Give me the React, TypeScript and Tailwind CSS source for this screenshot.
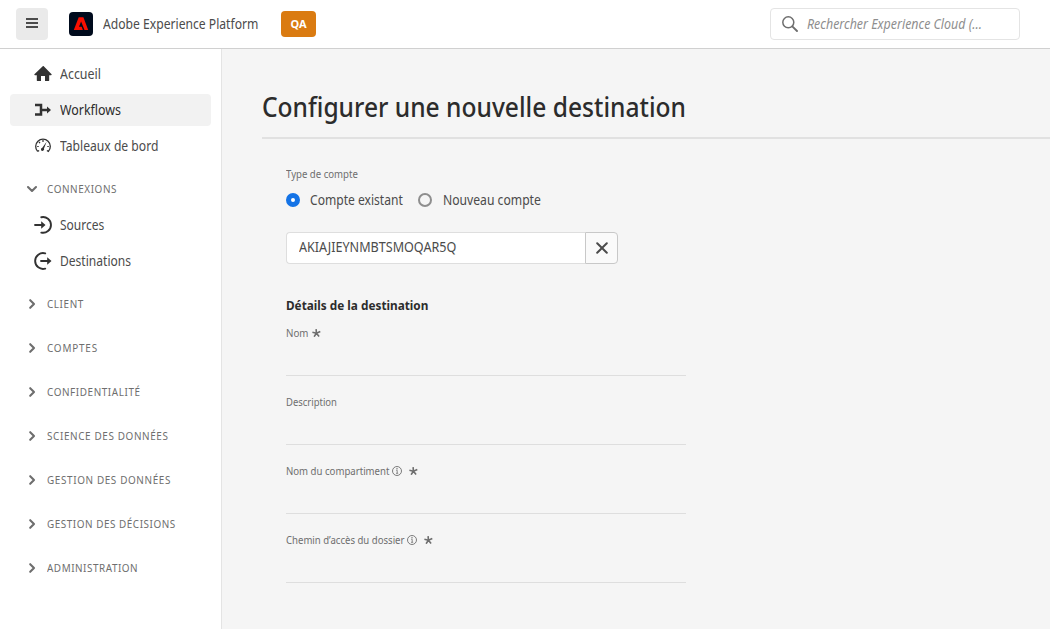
import type { ReactNode } from 'react';

const ink = 'text-[#4b4b4b]';

function Squeezed({ className, children }: { className: string; children: ReactNode }) {
  return <span className={`inline-block shrink-0 origin-left whitespace-nowrap ${className}`}>{children}</span>;
}

function Chevron({ open }: { open?: boolean }) {
  return (
    <svg width="12" height="12" viewBox="0 0 12 12" fill="none" stroke="#6e6e6e" strokeWidth="2.100" strokeLinecap="round" strokeLinejoin="round">
      {open ? <path d="M2 4l4 4 4-4" /> : <path d="M4.200 2.200l3.800 3.800-3.800 3.800" />}
    </svg>
  );
}

const icons: Record<string, ReactNode> = {
  home: <path fill="#323232" d="M9 1L.4 9.300c-.3.400 0 .900.500.900H2.800v5.300c0 .300.200.500.500.500h3.700v-5h4v5h3.700c.300 0 .500-.200.500-.500v-5.300h1.900c.500 0 .800-.500.500-.900L9.500 1.100a.7.700 0 0 0-.500-.100z" />,
  flow: (
    <>
      <path fill="none" stroke="#323232" strokeWidth="2.500" d="M1 4h6v9.500H1M7 9H14" />
      <path fill="#323232" d="M13 5.500L17 9l-4 3.500z" />
    </>
  ),
  gauge: (
    <>
      <path fill="none" stroke="#323232" strokeWidth="1.300" d="M3.600 14.400A7.300 7.300 0 1 1 14.400 14.400l-1.500-.900M3.600 14.400l1.500-.900" />
      <path fill="none" stroke="#323232" strokeWidth="1.200" d="M9 3v2M5 5l1 1.200M3.200 9.500h1.500M13.300 9.500h1.500" />
      <path fill="#323232" d="M12.600 4.800L10 11.600a1.600 1.600 0 1 1-1.700-.9z" />
    </>
  ),
  source: (
    <>
      <path fill="none" stroke="#323232" strokeWidth="1.900" strokeLinecap="round" d="M7.300 1.200A7.900 7.900 0 1 1 7.300 16.600" />
      <path fill="none" stroke="#323232" strokeWidth="1.800" strokeLinecap="round" d="M1 9h7" />
      <path fill="#323232" d="M7.200 5.200L11.500 9l-4.300 3.800z" />
    </>
  ),
  dest: (
    <>
      <path fill="none" stroke="#323232" strokeWidth="1.900" strokeLinecap="round" d="M11.200 1.400A7.900 7.900 0 1 0 11.200 16.600" />
      <path fill="none" stroke="#323232" strokeWidth="1.800" strokeLinecap="round" d="M7 9h7" />
      <path fill="#323232" d="M13.200 5.200L17.500 9l-4.300 3.800z" />
    </>
  ),
};

function NavItem({ icon, label, active, fit }: { icon: string; label: string; active?: boolean; fit: string }) {
  return (
    <a className={`flex h-8 items-center gap-2 rounded pl-6 text-[13.5px] ${active ? 'bg-[#f2f2f2] text-[#2c2c2c]' : ink}`}>
      <svg width="18" height="18" viewBox="0 0 18 18">{icons[icon]}</svg>
      <Squeezed className={fit}>{label}</Squeezed>
    </a>
  );
}

function Section({ label, open, fit }: { label: string; open?: boolean; fit: string }) {
  return (
    <div className="flex h-8 items-center gap-[9px] pl-4 text-[11px] text-[#6e6e6e]">
      <Chevron open={open} />
      <Squeezed className={`scale-x-90 ${fit}`}>{label}</Squeezed>
    </div>
  );
}

function Field({ label, info, required, fit }: { label: string; info?: boolean; required?: boolean; fit: string }) {
  return (
    <div className="flex h-[69px] w-[400px] flex-col border-b border-[#dedede] pt-[18px]">
      <div className="flex h-4 items-center text-[11px] text-[#6e6e6e]">
        <Squeezed className={fit}>{label}</Squeezed>
        {info && (
          <svg className="ml-[3px]" width="10" height="10" viewBox="0 0 10 10">
            <circle cx="5" cy="5" r="4.500" fill="none" stroke="#6e6e6e" strokeWidth=".9" />
            <path d="M4.200 4.300H5.200V7.200M4 7.300H6.200" fill="none" stroke="#6e6e6e" strokeWidth=".8" />
            <circle cx="5" cy="2.700" r=".7" fill="#6e6e6e" />
          </svg>
        )}
        {required && (
          <svg className={info ? 'ml-[7px]' : 'ml-1'} width="9" height="8" viewBox="0 0 9 8" stroke="#6e6e6e" strokeWidth="1.600">
            <path d="M4.400 4.200L4.100.1M4.400 4.200L.4 3.300M4.400 4.200L8.300 2.500M4.400 4.200L2.100 7.700M4.400 4.200L7.100 7.500" />
          </svg>
        )}
      </div>
    </div>
  );
}

export default function App() {
  return (
    <div className="flex h-[629px] w-[1050px] flex-col overflow-hidden bg-white font-['Noto_Sans',sans-serif]">
      <header className="flex h-[49px] shrink-0 items-center border-b border-[#d0d0d0] pl-4 pr-[30px]">
        <button className="flex size-8 items-center justify-center rounded bg-[#eaeaea]">
          <svg width="12" height="10" viewBox="0 0 12 10" fill="#4b4b4b" className="mb-0.5">
            <path d="M0 0h12v2H0zM0 4h12v2H0zM0 8h12v2H0z" />
          </svg>
        </button>
        <svg className="ml-[21px]" width="24" height="24" viewBox="0 0 24 24">
          <rect width="24" height="24" rx="4" fill="#000b1d" />
          <path fill="#fa0f00" d="M9.700 5.300h4.700L19.200 18h-3.700L12.100 9.600l-2.100 5.200h2.700l1.200 3.200H4.800z" />
        </svg>
        <Squeezed className={`ml-[10px] w-[155px] scale-x-[0.899] text-[13.5px] ${ink}`}>Adobe Experience Platform</Squeezed>
        <span className="ml-[23px] flex h-[26px] w-[35px] items-center justify-center rounded bg-[#da7b11] text-[11px] font-bold text-white">QA</span>
        <div className="ml-auto flex h-8 w-[250px] items-center gap-[9px] rounded border border-[#e4e4e4] pl-[11px] text-[13.5px] italic text-[#8e8e8e]">
          <svg width="16" height="16" viewBox="0 0 16 16" fill="none" stroke="#6e6e6e">
            <circle cx="6.300" cy="6.300" r="5.500" strokeWidth="1.500" />
            <path d="M10.300 10.300L15 15" strokeWidth="1.900" strokeLinecap="round" />
          </svg>
          <Squeezed className="scale-x-[0.92]">Rechercher Experience Cloud (...</Squeezed>
        </div>
      </header>
      <div className="flex min-h-0 grow">
        <nav className="w-[222px] shrink-0 border-r border-[#e4e4e4] pl-[10px] pr-[10px] pt-[9px]">
          <div className="flex flex-col gap-1">
            <NavItem icon="home" label="Accueil" fit="scale-x-[0.92]" />
            <NavItem icon="flow" label="Workflows" active fit="scale-x-[0.92]" />
            <NavItem icon="gauge" label="Tableaux de bord" fit="scale-x-[0.899]" />
          </div>
          <div className="mt-[11px] flex flex-col gap-1">
            <Section label="CONNEXIONS" open fit="tracking-[0.65px]" />
            <NavItem icon="source" label="Sources" fit="scale-x-[0.89]" />
            <NavItem icon="dest" label="Destinations" fit="scale-x-[0.893]" />
          </div>
          <div className="mt-[11px] flex flex-col gap-3">
            <Section label="CLIENT" fit="tracking-[0.65px]" />
            <Section label="COMPTES" fit="tracking-[0.9px]" />
            <Section label="CONFIDENTIALITÉ" fit="tracking-[0.65px]" />
            <Section label="SCIENCE DES DONNÉES" fit="tracking-[0.7px]" />
            <Section label="GESTION DES DONNÉES" fit="tracking-[0.7px]" />
            <Section label="GESTION DES DÉCISIONS" fit="tracking-[0.6px]" />
            <Section label="ADMINISTRATION" fit="tracking-[0.6px]" />
          </div>
        </nav>
        <main className="grow bg-[#f5f5f5] pl-10">
          <div className="flex h-[90px] items-center border-b-2 border-[#e1e1e1] pt-[28px]">
            <h1 className="text-[26.5px] font-medium leading-9 text-[#2c2c2c]">
              <Squeezed className="scale-x-[0.927]">Configurer une nouvelle destination</Squeezed>
            </h1>
          </div>
          <div className="pl-6 pt-[27px]">
            <div className="flex h-4 items-center text-[11px] text-[#6e6e6e]"><Squeezed className="scale-x-[0.873]">Type de compte</Squeezed></div>
            <div className={`mt-2 flex h-5 items-center text-[13.5px] ${ink}`}>
              <span className="size-[14px] rounded-full border-[5px] border-[#1473e6] bg-white" />
              <Squeezed className="ml-[10px] w-[108px] scale-x-[0.895]">Compte existant</Squeezed>
              <span className="size-[14px] rounded-full border-2 border-[#8e8e8e]" />
              <Squeezed className="ml-[11px] scale-x-90">Nouveau compte</Squeezed>
            </div>
            <div className="mt-[22px] flex h-8 w-[332px]">
              <div className={`flex grow items-center rounded-l border border-r-0 border-[#dedede] bg-white pb-0.5 pl-3 text-[13.5px] ${ink}`}>
                <Squeezed className="scale-x-[0.932]">AKIAJIEYNMBTSMOQAR5Q</Squeezed>
              </div>
              <button className="flex w-[33px] items-center justify-center rounded-r border border-[#c8c8c8] bg-[#fafafa]">
                <svg width="12" height="12" viewBox="0 0 12 12" stroke="#4b4b4b" strokeWidth="2" strokeLinecap="round">
                  <path d="M1.200 1.200l9.600 9.600M10.800 1.200l-9.600 9.600" />
                </svg>
              </button>
            </div>
            <h2 className="mt-[31px] h-5 text-[13px] font-bold leading-5 text-[#2c2c2c]"><Squeezed className="scale-x-[0.906]">Détails de la destination</Squeezed></h2>
            <div className="-mt-2">
              <Field label="Nom" required fit="w-[22px] scale-x-[0.886]" />
              <Field label="Description" fit="scale-x-[0.86]" />
              <Field label="Nom du compartiment" info required fit="w-[103px] scale-x-[0.874]" />
              <Field label="Chemin d’accès du dossier" info required fit="w-[118px] scale-x-[0.871]" />
            </div>
          </div>
        </main>
      </div>
    </div>
  );
}
